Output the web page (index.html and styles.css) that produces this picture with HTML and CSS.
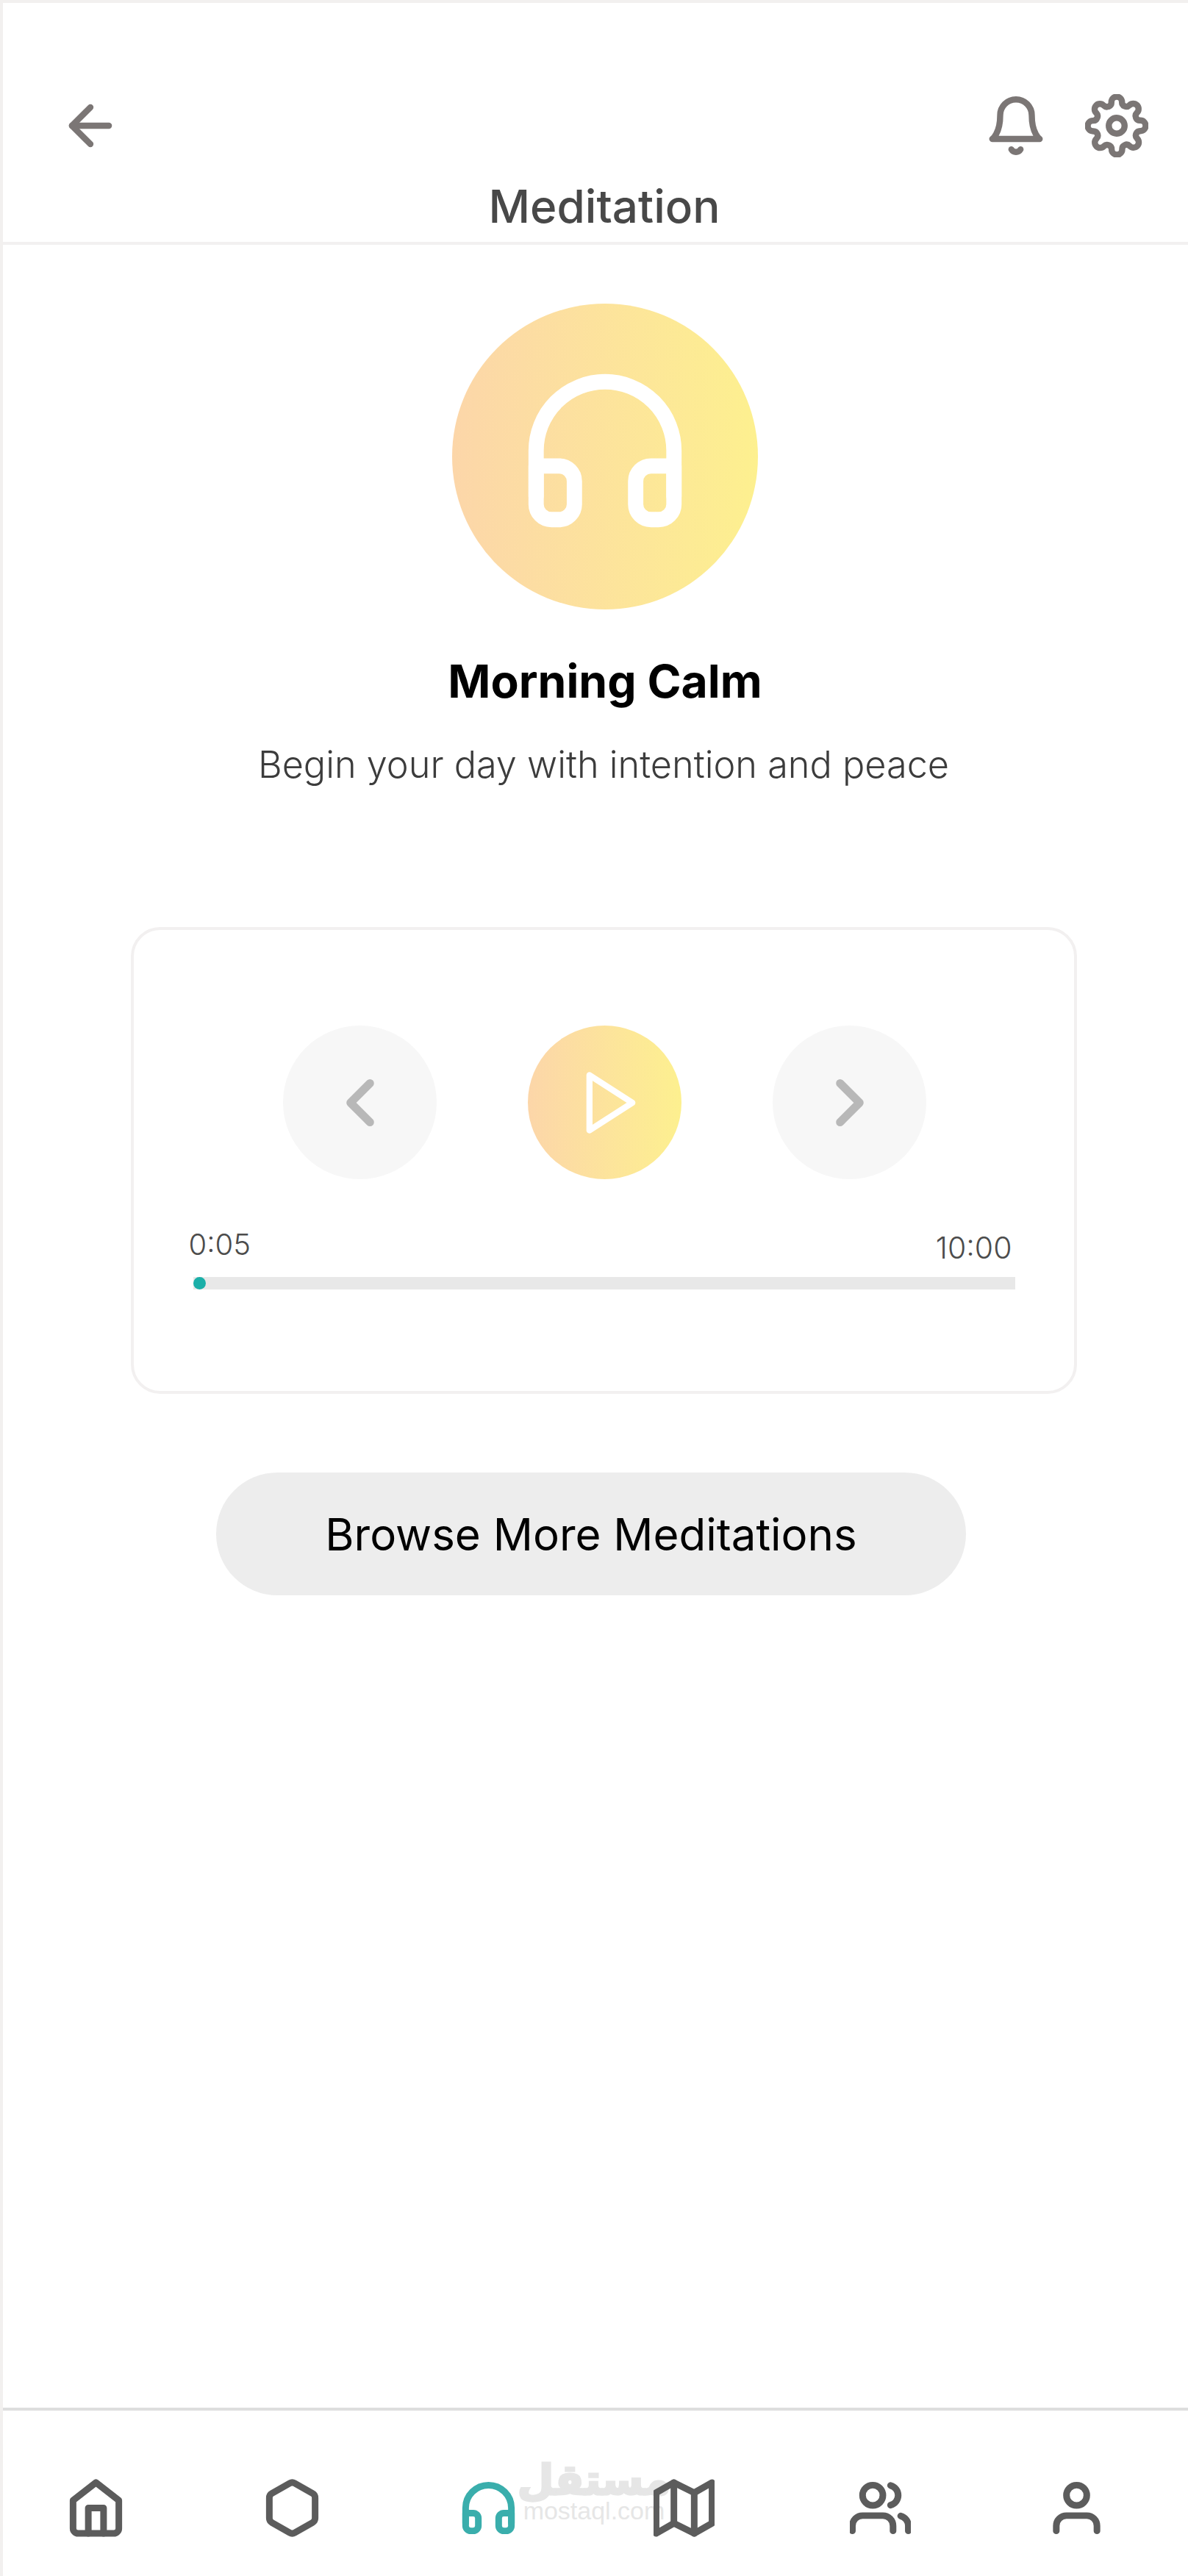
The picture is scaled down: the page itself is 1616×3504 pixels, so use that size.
FILE: index.html
```html
<!DOCTYPE html>
<html lang="en">
<head>
  <meta charset="UTF-8">
  <title>Meditation</title>
  <link rel="stylesheet" href="styles.css">
</head>
<body>
  <div class="screen">
    <!-- Header -->
    <header class="header">
      <div class="header-icons">
        <svg class="icon icon-back" viewBox="0 0 24 24"><path d="M19 12H5"/><path d="M12 19l-7-7 7-7"/></svg>
        <div class="header-right">
          <svg class="icon" viewBox="0 0 24 24"><path d="M18 8A6 6 0 0 0 6 8c0 7-3 9-3 9h18s-3-2-3-9"/><path d="M13.73 21a2 2 0 0 1-3.46 0"/></svg>
          <svg class="icon" viewBox="0 0 24 24"><circle cx="12" cy="12" r="3"/><path d="M19.4 15a1.65 1.65 0 0 0 .33 1.82l.06.06a2 2 0 0 1 0 2.83 2 2 0 0 1-2.83 0l-.06-.06a1.65 1.65 0 0 0-1.82-.33 1.65 1.65 0 0 0-1 1.51V21a2 2 0 0 1-2 2 2 2 0 0 1-2-2v-.09A1.65 1.65 0 0 0 9 19.4a1.65 1.65 0 0 0-1.82.33l-.06.06a2 2 0 0 1-2.83 0 2 2 0 0 1 0-2.83l.06-.06a1.65 1.65 0 0 0 .33-1.82 1.65 1.65 0 0 0-1.51-1H3a2 2 0 0 1-2-2 2 2 0 0 1 2-2h.09A1.65 1.65 0 0 0 4.6 9a1.65 1.65 0 0 0-.33-1.82l-.06-.06a2 2 0 0 1 0-2.83 2 2 0 0 1 2.83 0l.06.06a1.65 1.65 0 0 0 1.82.33H9a1.65 1.65 0 0 0 1-1.51V3a2 2 0 0 1 2-2 2 2 0 0 1 2 2v.09a1.65 1.65 0 0 0 1 1.51 1.65 1.65 0 0 0 1.82-.33l.06-.06a2 2 0 0 1 2.83 0 2 2 0 0 1 0 2.83l-.06.06a1.65 1.65 0 0 0-.33 1.82V9a1.65 1.65 0 0 0 1.51 1H21a2 2 0 0 1 2 2 2 2 0 0 1-2 2h-.09a1.65 1.65 0 0 0-1.51 1z"/></svg>
        </div>
      </div>
      <h1 class="title">Meditation</h1>
    </header>

    <main class="content">
      <div class="cover">
        <svg class="icon cover-icon" viewBox="0 0 24 24"><path d="M3 18v-6a9 9 0 0 1 18 0v6"/><path d="M21 19a2 2 0 0 1-2 2h-1a2 2 0 0 1-2-2v-3a2 2 0 0 1 2-2h3zM3 19a2 2 0 0 0 2 2h1a2 2 0 0 0 2-2v-3a2 2 0 0 0-2-2H3z"/></svg>
      </div>
      <h2 class="track-title">Morning Calm</h2>
      <p class="track-sub">Begin your day with intention and peace</p>

      <!-- Player -->
      <section class="player">
        <div class="controls">
          <div class="ctrl">
            <svg class="icon chevron" viewBox="0 0 24 24"><path d="M15 18l-6-6 6-6"/></svg>
          </div>
          <div class="ctrl ctrl-play">
            <svg class="icon play" viewBox="0 0 24 24"><path d="M5 3l14 9-14 9V3z"/></svg>
          </div>
          <div class="ctrl">
            <svg class="icon chevron" viewBox="0 0 24 24"><path d="M9 18l6-6-6-6"/></svg>
          </div>
        </div>
        <div class="times">
          <span>0:05</span>
          <span class="time-end">10:00</span>
        </div>
        <div class="bar"><div class="bar-dot"></div></div>
      </section>

      <button class="browse">Browse More Meditations</button>
    </main>

    <!-- Bottom nav -->
    <nav class="nav">
      <svg class="icon" viewBox="0 0 24 24"><path d="M3 9l9-7 9 7v11a2 2 0 0 1-2 2H5a2 2 0 0 1-2-2z"/><path d="M9 22V12h6v10"/></svg>
      <svg class="icon" viewBox="0 0 24 24"><path d="M21 16V8a2 2 0 0 0-1-1.73l-7-4a2 2 0 0 0-2 0l-7 4A2 2 0 0 0 3 8v8a2 2 0 0 0 1 1.73l7 4a2 2 0 0 0 2 0l7-4A2 2 0 0 0 21 16z"/></svg>
      <svg class="icon icon-active" viewBox="0 0 24 24"><path d="M3 18v-6a9 9 0 0 1 18 0v6"/><path d="M21 19a2 2 0 0 1-2 2h-1a2 2 0 0 1-2-2v-3a2 2 0 0 1 2-2h3zM3 19a2 2 0 0 0 2 2h1a2 2 0 0 0 2-2v-3a2 2 0 0 0-2-2H3z"/></svg>
      <svg class="icon" viewBox="0 0 24 24"><path d="M1 6v16l7-4 8 4 7-4V2l-7 4-8-4-7 4z"/><path d="M8 2v16"/><path d="M16 6v16"/></svg>
      <svg class="icon" viewBox="0 0 24 24"><path d="M17 21v-2a4 4 0 0 0-4-4H5a4 4 0 0 0-4 4v2"/><circle cx="9" cy="7" r="4"/><path d="M23 21v-2a4 4 0 0 0-3-3.87"/><path d="M16 3.13a4 4 0 0 1 0 7.75"/></svg>
      <svg class="icon" viewBox="0 0 24 24"><path d="M20 21v-2a4 4 0 0 0-4-4H8a4 4 0 0 0-4 4v2"/><circle cx="12" cy="7" r="4"/></svg>
      <div class="watermark">
        <span class="wm-ar">مستقل</span>
        <span class="wm-en">mostaql.com</span>
      </div>
    </nav>
  </div>
</body>
</html>
```

FILE: styles.css
```css
* {
  box-sizing: border-box;
}
body {
  margin: 0;
  background-color: #fff;
  font-family: 'Inter', 'Liberation Sans', sans-serif;
}
.screen {
  width: 1616px;
  height: 3504px;
  display: flex;
  flex-direction: column;
  border-left: 4px solid #f2f0ef;
  border-top: 4px solid #f2f0ef;
}
.icon {
  display: block;
  width: 86px;
  height: 86px;
  fill: none;
  stroke: #5c5c5c;
  stroke-width: 2.25;
  stroke-linecap: round;
  stroke-linejoin: round;
  flex-shrink: 0;
}
/* --- Header --- */
.header {
  height: 329px;
  border-bottom: 4px solid #f2f0f0;
  padding-top: 124px;
}
.header-icons {
  display: flex;
  justify-content: space-between;
  padding: 0 54px 0 76px;
}
.header-icons .icon {
  stroke: #7b7675;
  stroke-width: 2.35;
}
.header-right {
  display: flex;
  gap: 51px;
}
.title {
  margin: 31px 0 0;
  padding-left: 24px;
  text-align: center;
  font-size: 62px;
  font-weight: 550;
  line-height: 72px;
  color: #484848;
}
/* --- Content --- */
.content {
  flex: 1;
  display: flex;
  flex-direction: column;
  align-items: center;
  padding-top: 80px;
  padding-left: 26px;
}
.cover {
  width: 416px;
  height: 416px;
  padding-bottom: 16px;
  border-radius: 50%;
  display: flex;
  align-items: center;
  justify-content: center;
  background: linear-gradient(90deg, #fcd6a9, #fdf08f);
}
.cover-icon {
  width: 250px;
  height: 250px;
  stroke: #fff;
  stroke-width: 2;
}
.track-title {
  margin: 60px 0 0;
  font-size: 62.4px;
  font-weight: 700;
  line-height: 76px;
  color: #000;
}
.track-sub {
  margin: 45px 4px 0 0;
  font-size: 50.4px;
  font-weight: 300;
  line-height: 60px;
  color: #3c3c3c;
}
/* --- Player --- */
.player {
  width: 1287px;
  height: 635px;
  margin: 191px 4px 0 0;
  padding: 130px 80px 0 75px;
  border: 4px solid #f2f0f0;
  border-radius: 40px;
}
.controls {
  display: flex;
  justify-content: center;
  gap: 124px;
  padding-left: 8px;
}
.ctrl {
  width: 209px;
  height: 209px;
  border-radius: 50%;
  background-color: #f7f7f7;
  display: flex;
  align-items: center;
  justify-content: center;
}
.ctrl-play {
  padding-left: 17px;
  background: linear-gradient(90deg, #fcd6a9, #fdf08f);
}
.chevron {
  width: 106px;
  height: 106px;
  stroke: #b8b8b8;
  stroke-width: 2.5;
}
.play {
  width: 100px;
  height: 100px;
  stroke: #fff;
  stroke-width: 2;
}
.times {
  display: flex;
  justify-content: space-between;
  margin-top: 64px;
  padding-right: 4px;
  font-size: 40px;
  line-height: 50px;
  font-weight: 350;
  color: #4c4c4c;
}
.time-end {
  margin-top: 4px;
  font-size: 41px;
}
.bar {
  margin: 15px 0 0 6px;
  height: 17px;
  background-color: #e8e8e8;
}
.bar-dot {
  width: 17px;
  height: 17px;
  border-radius: 50%;
  background-color: #1aafa8;
}
/* --- Browse button --- */
.browse {
  width: 1020px;
  height: 167px;
  margin-top: 107px;
  margin-right: 38px;
  border: none;
  border-radius: 84px;
  background-color: #ededed;
  color: #000;
  font-family: inherit;
  font-size: 60px;
  font-weight: 400;
}
/* --- Bottom nav --- */
.nav {
  position: relative;
  height: 229px;
  flex-shrink: 0;
  display: flex;
  justify-content: space-between;
  padding: 91px 110px 0 85px;
  border-top: 4px solid #dedede;
}
.nav .icon {
  width: 83px;
  height: 83px;
  stroke-width: 2.6;
}
.nav .icon-active {
  stroke: #3aaeac;
}
/* logo chìm, nằm dưới các icon */
.watermark {
  position: absolute;
  left: 699px;
  top: 68px;
  z-index: -1;
  width: 210px;
  display: flex;
  flex-direction: column;
  align-items: center;
  color: #e6e6e6;
  font-family: 'DejaVu Sans', sans-serif;
}
.wm-ar {
  font-size: 57px;
  font-weight: 700;
  line-height: 52px;
  -webkit-text-stroke: 3px #e6e6e6;
}
.wm-en {
  font-family: 'Liberation Sans', sans-serif;
  font-size: 34px;
  line-height: 32px;
}
```
